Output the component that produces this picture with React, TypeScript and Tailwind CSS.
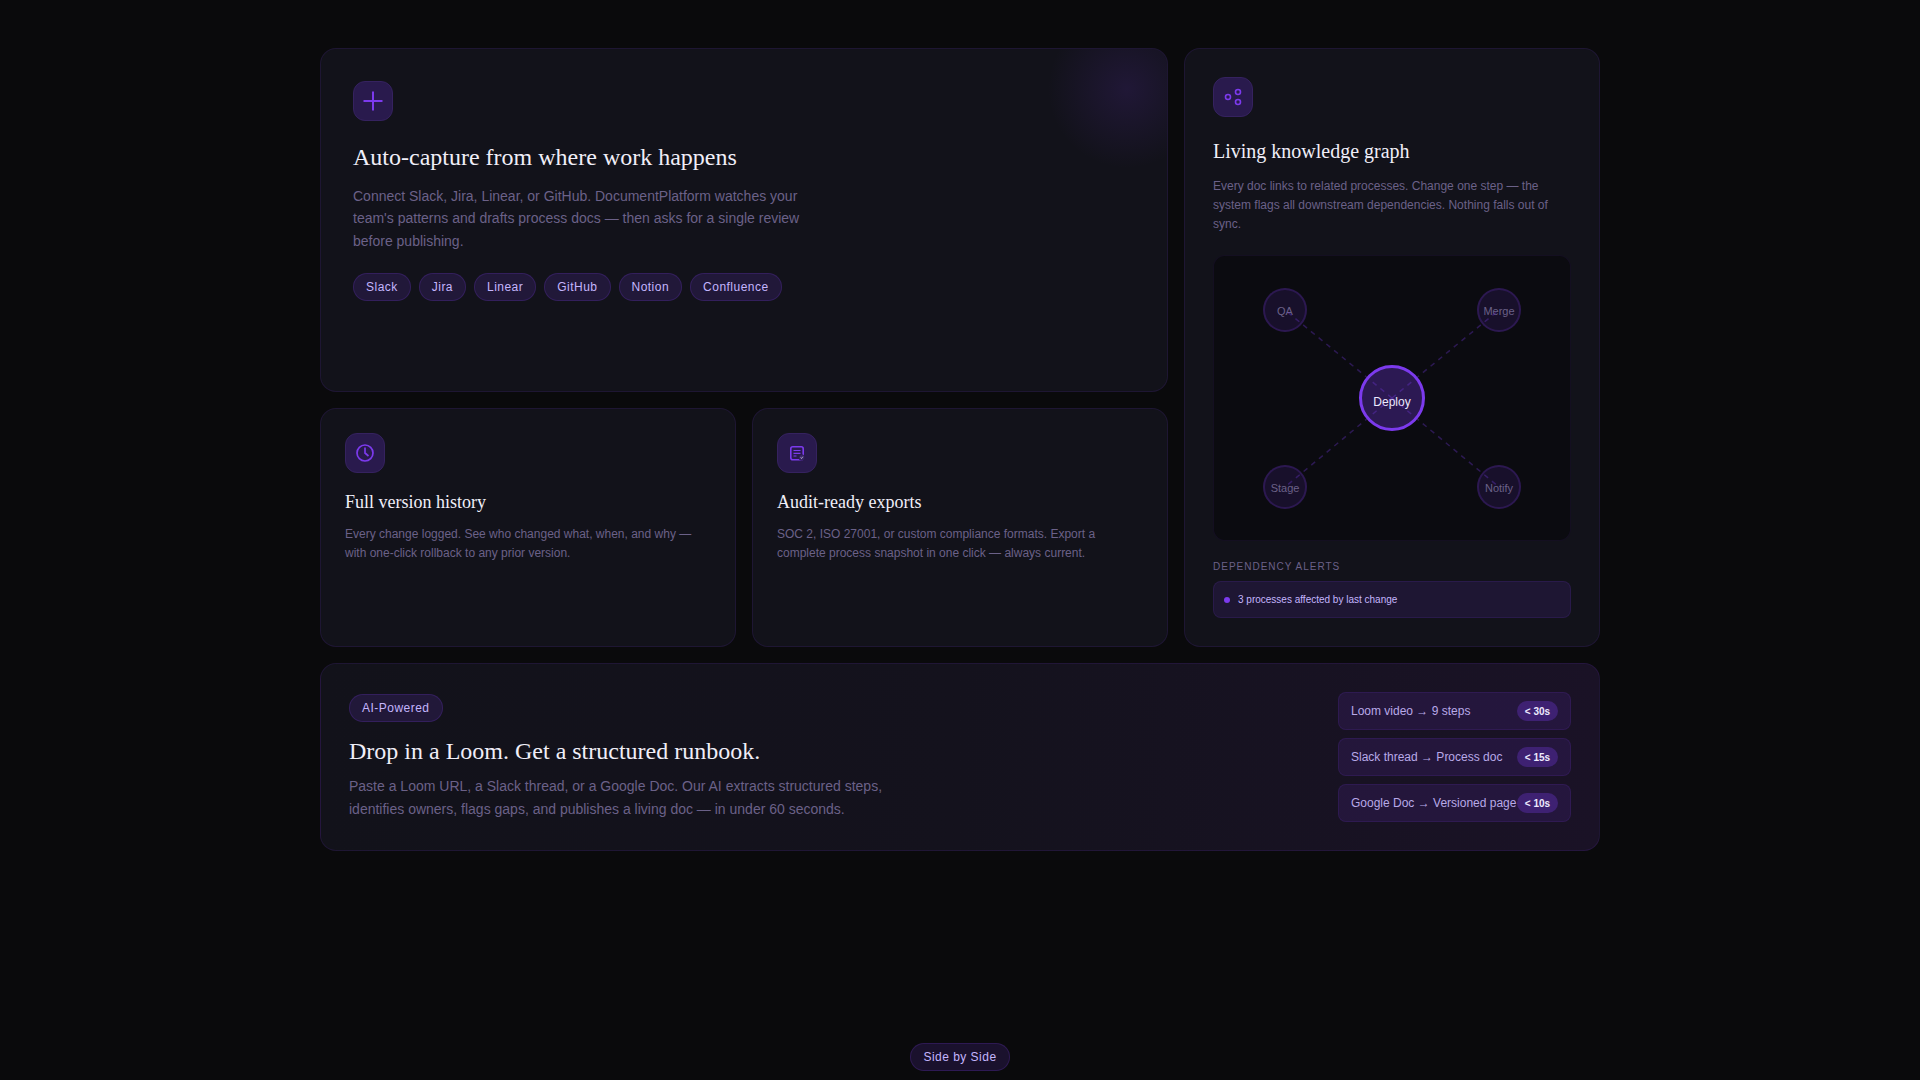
import React from "react";

const sans = "font-['Liberation_Sans',Arial,sans-serif]";
const serif = "font-['Liberation_Serif','Times_New_Roman',serif]";

const tools = ["Slack", "Jira", "Linear", "GitHub", "Notion", "Confluence"];

const outer = [
  { label: "QA", x: 71, y: 54 },
  { label: "Merge", x: 285, y: 54 },
  { label: "Stage", x: 71, y: 231 },
  { label: "Notify", x: 285, y: 231 },
];

const conversions = [
  { text: "Loom video → 9 steps", time: "< 30s" },
  { text: "Slack thread → Process doc", time: "< 15s" },
  { text: "Google Doc → Versioned page", time: "< 10s" },
];

function Pill({ children }: { children: React.ReactNode }) {
  return (
    <span className="inline-flex h-[28px] items-center rounded-full border border-[#7c3aed33] bg-[#7c3aed26] px-[12px] text-[12px] tracking-[0.48px] text-[#c4b5fd]">
      {children}
    </span>
  );
}

function IconBox({ children }: { children: React.ReactNode }) {
  return (
    <div className="flex h-[40px] w-[40px] items-center justify-center rounded-[12px] border border-[#35225f] bg-[#291a4d] text-[#7c3aed]">
      {children}
    </div>
  );
}

function Card({ className, children }: { className: string; children: React.ReactNode }) {
  return (
    <div className={"relative overflow-hidden rounded-2xl border border-[#7c3aed1f] bg-[#12121a] " + className}>
      {children}
    </div>
  );
}

export default function App() {
  return (
    <div className={"flex min-h-screen flex-col bg-[#0a0a0c] " + sans}>
      <div className="mx-auto grid w-[1280px] grid-cols-3 grid-rows-[344px_239px_auto] gap-4 pt-12">
        <Card className="col-span-2 p-8">
          <div className="absolute -right-[40px] -top-[40px] h-[160px] w-[160px] bg-[radial-gradient(circle,#7c3aed22_0%,transparent_70%)]" />
          <IconBox>
            <svg width="20" height="20" viewBox="0 0 20 20" fill="none" stroke="currentColor" strokeWidth="2">
              <path d="M10 0.5v19M0.5 10h19" />
            </svg>
          </IconBox>
          <h2 className={"mt-5 text-[24px] leading-[32px] text-[#f0eef8] " + serif}>Auto-capture from where work happens</h2>
          <p className="mt-3 w-[480px] text-[14px] leading-[22.4px] text-[#6b6188]">
            Connect Slack, Jira, Linear, or GitHub. DocumentPlatform watches your team's patterns and drafts process docs — then asks for a single review before publishing.
          </p>
          <div className="mt-[21px] flex gap-2">
            {tools.map((t) => (
              <Pill key={t}>{t}</Pill>
            ))}
          </div>
        </Card>

        <Card className="row-span-2 flex flex-col p-7">
          <IconBox>
            <svg width="18" height="18" viewBox="0 0 18 18" fill="none" stroke="currentColor" strokeWidth="1.6">
              <circle cx="4" cy="9" r="2.5" />
              <circle cx="14" cy="4" r="2.5" />
              <circle cx="14" cy="14" r="2.5" />
            </svg>
          </IconBox>
          <h2 className={"mt-5 text-[20px] leading-[28px] text-[#f0eef8] " + serif}>Living knowledge graph</h2>
          <p className="mt-3 text-[12px] leading-[19.2px] text-[#6b6188]">
            Every doc links to related processes. Change one step — the system flags all downstream dependencies. Nothing falls out of sync.
          </p>
          <div className="relative mt-5 h-[287px] rounded-xl border border-[#7c3aed14] bg-[#0b0b10]">
            {outer.map((n) => (
              <div
                key={n.label}
                className="absolute flex h-[44px] w-[44px] -translate-x-1/2 -translate-y-1/2 items-center justify-center rounded-full border-2 border-[#7c3aed33] bg-[#7c3aed1f] pt-[3px] text-[11px] text-[#6b6188]"
                style={{ left: n.x, top: n.y }}
              >
                {n.label}
              </div>
            ))}
            <div className="absolute left-[178px] top-[142px] flex h-[66px] w-[66px] -translate-x-1/2 -translate-y-1/2 items-center justify-center rounded-full border-[3px] border-[#7c3aed] bg-[#7c3aed4d] pt-[8px] text-[12px] text-[#ede9fe]">
              Deploy
            </div>
            <svg className="absolute inset-0" width="100%" height="100%" fill="none" stroke="#7c3aed" strokeOpacity="0.3" strokeWidth="1.5" strokeDasharray="5 5">
              {outer.map((n) => (
                <line key={n.label} x1="178" y1="142" x2={n.x} y2={n.y} />
              ))}
            </svg>
          </div>
          <div className="mt-5 text-[10px] leading-[12px] tracking-[1px] text-[#6b6188]">DEPENDENCY ALERTS</div>
          <div className="mt-2 flex h-[37px] items-center gap-2 rounded-lg border border-[#7c3aed1f] bg-[#7c3aed1f] px-[10px] text-[10px] text-[#c4b5fd]">
            <span className="h-[6px] w-[6px] rounded-full bg-[#7c3aed]" />
            3 processes affected by last change
          </div>
        </Card>

        <Card className="p-6">
          <IconBox>
            <svg width="20" height="20" viewBox="0 0 20 20" fill="none" stroke="currentColor" strokeWidth="1.7">
              <circle cx="10" cy="10" r="8" />
              <path d="M10 4.5v5.5l3.5 3" />
            </svg>
          </IconBox>
          <h3 className={"mt-4 text-[18px] leading-[27px] text-[#f0eef8] " + serif}>Full version history</h3>
          <p className="mt-[9px] text-[12px] leading-[19.2px] text-[#6b6188]">
            Every change logged. See who changed what, when, and why — with one-click rollback to any prior version.
          </p>
        </Card>

        <Card className="p-6">
          <IconBox>
            <svg width="20" height="20" viewBox="0 0 20 20" fill="none" stroke="currentColor" strokeWidth="1.6">
              <rect x="3.8" y="3.8" width="12.4" height="13" rx="2" />
              <path d="M6.5 7.5h7M6.5 10.3h7M6.5 13h3" strokeWidth="1.2" />
              <circle cx="14.7" cy="14.5" r="2.8" fill="#3d2a6b" stroke="#291a4d" strokeWidth="0.8" />
              <path d="M13.6 14.5l.9 1 1.4-1.8" stroke="#c9c4d6" strokeWidth="0.8" />
            </svg>
          </IconBox>
          <h3 className={"mt-4 text-[18px] leading-[27px] text-[#f0eef8] " + serif}>Audit-ready exports</h3>
          <p className="mt-[9px] text-[12px] leading-[19.2px] text-[#6b6188]">
            SOC 2, ISO 27001, or custom compliance formats. Export a complete process snapshot in one click — always current.
          </p>
        </Card>

        <Card className="col-span-3 flex items-center justify-between bg-gradient-to-r from-[#12121a] via-[#14121d] to-[#1a1226] p-7">
          <div>
            <Pill>AI-Powered</Pill>
            <h2 className={"mt-[13px] text-[24px] leading-[32px] text-[#f0eef8] " + serif}>Drop in a Loom. Get a structured runbook.</h2>
            <p className="mt-[8px] w-[560px] text-[14px] leading-[22.4px] text-[#6b6188]">
              Paste a Loom URL, a Slack thread, or a Google Doc. Our AI extracts structured steps, identifies owners, flags gaps, and publishes a living doc — in under 60 seconds.
            </p>
          </div>
          <div className="flex w-[233px] flex-col gap-2">
            {conversions.map((c) => (
              <div key={c.time} className="flex h-[38px] items-center justify-between whitespace-nowrap rounded-lg border border-[#7c3aed1f] bg-[#7c3aed1f] px-3 text-[12px] text-[#b8a9e8]">
                <span>{c.text}</span>
                <span className="flex h-[20px] w-[41px] shrink-0 items-center justify-center rounded-full bg-[#7c3aed4d] text-[10px] font-bold text-[#ede9fe]">{c.time}</span>
              </div>
            ))}
          </div>
        </Card>
      </div>

      <div className="mb-[9px] mt-auto self-center">
        <Pill>Side by Side</Pill>
      </div>
    </div>
  );
}
